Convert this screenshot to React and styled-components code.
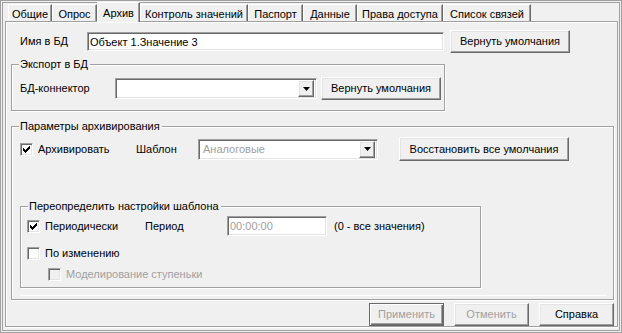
import React from "react";
import styled, { createGlobalStyle, css } from "styled-components";

const GlobalStyle = createGlobalStyle`
  html, body {
    margin: 0;
    padding: 0;
    background: #f0f0f0;
  }
  body {
    font-family: "Liberation Sans", Arial, sans-serif;
    font-size: 11px;
    line-height: 13px;
    color: #000;
  }
  * {
    box-sizing: border-box;
  }
`;

const sunken = css`
  border: 1px solid;
  border-color: #a0a0a0 #ffffff #ffffff #a0a0a0;
  box-shadow: inset 1px 1px #696969, inset -1px -1px #e3e3e3;
`;

const raised = css`
  border: 1px solid;
  border-color: #ffffff #696969 #696969 #ffffff;
  box-shadow: inset -1px -1px #a0a0a0, inset 1px 1px #e3e3e3;
`;

const Window = styled.div`
  width: 622px;
  height: 333px;
  border: 1px solid #a0a0a0;
  box-shadow: inset 0 0 0 1px #f0f0f0, inset 0 0 0 2px #a0a0a0;
  display: flex;
  flex-direction: column;
  background: #f0f0f0;
  overflow: hidden;
`;

const TabStrip = styled.div`
  display: flex;
  align-items: flex-start;
  height: 19px;
  margin-top: 1px;
  padding-left: 7px;
  position: relative;
  z-index: 2;
`;

const Tab = styled.div`
  width: ${(p) => p.$w}px;
  height: ${(p) => (p.$active ? 20 : 17)}px;
  margin-top: ${(p) => (p.$active ? 0 : 2)}px;
  padding-top: ${(p) => (p.$active ? 4 : 3)}px;
  text-align: center;
  white-space: nowrap;
  background: #f0f0f0;
  border-top: 1px solid #ffffff;
  border-left: 1px solid #ffffff;
  border-right: 1px solid #696969;
  box-shadow: inset -1px 0 #a0a0a0;
`;

const Pane = styled.div`
  flex: 1;
  min-height: 0;
  margin: 0 3px 5px 4px;
  padding: 8px 3px 0 5px;
  border: 1px solid #a0a0a0;
  box-shadow: inset 1px 1px #ffffff, 0 1px #ffffff;
  display: flex;
  flex-direction: column;
`;

const Row = styled.div`
  display: flex;
  align-items: center;
  height: ${(p) => p.$h || 23}px;
  margin-left: ${(p) => p.$ml || 0}px;
  margin-top: ${(p) => p.$mt || 0}px;
  flex: none;
`;

const Label = styled.span`
  width: ${(p) => (p.$w ? `${p.$w}px` : "auto")};
  margin-left: ${(p) => p.$ml || 0}px;
  flex: none;
  white-space: nowrap;
  color: ${(p) => (p.$disabled ? "#a0a0a0" : "#000")};
`;

const TextField = styled.input`
  ${sunken};
  width: ${(p) => p.$w}px;
  height: ${(p) => p.$h}px;
  padding: 0 0 0 2px;
  margin: 0;
  font: inherit;
  color: ${(p) => (p.$disabled ? "#a0a0a0" : "#000")};
  background: #ffffff;
  outline: none;
  flex: none;
`;

const Button = styled.button`
  ${raised};
  width: ${(p) => p.$w}px;
  height: ${(p) => p.$h || 23}px;
  margin: 0 0 0 ${(p) => p.$ml || 0}px;
  padding: 0;
  font: inherit;
  color: ${(p) => (p.disabled ? "#a0a0a0" : "#000")};
  background: #f0f0f0;
  flex: none;
  white-space: nowrap;
  ${(p) =>
    p.$default &&
    css`
      border-color: #696969;
      box-shadow: inset 1px 1px #ffffff, inset -1px -1px #696969,
        inset -2px -2px #a0a0a0;
    `}
`;

const ComboBox = styled.div`
  ${sunken};
  width: ${(p) => p.$w}px;
  height: 21px;
  padding: 2px;
  background: #ffffff;
  display: flex;
  align-items: center;
  flex: none;
`;

const ComboText = styled.span`
  flex: 1;
  padding-left: 2px;
  color: ${(p) => (p.$disabled ? "#a0a0a0" : "#000")};
  white-space: nowrap;
`;

const DropButton = styled.span`
  ${raised};
  width: 16px;
  height: 17px;
  background: #f0f0f0;
  display: flex;
  align-items: center;
  justify-content: center;
  flex: none;
`;

const Group = styled.div`
  position: relative;
  border: 1px solid #a0a0a0;
  box-shadow: inset 1px 1px #ffffff, 1px 1px #ffffff;
  margin-top: ${(p) => p.$mt || 0}px;
  width: ${(p) => (p.$w ? `${p.$w}px` : "auto")};
  padding: ${(p) => p.$pad};
  flex: ${(p) => (p.$grow ? "1 1 0" : "none")};
  min-height: 0;
`;

const Caption = styled.span`
  position: absolute;
  top: -7px;
  left: 7px;
  padding: 0 2px 0 1px;
  background: #f0f0f0;
  white-space: nowrap;
`;

const CheckWrap = styled.label`
  display: flex;
  align-items: center;
  width: ${(p) => (p.$w ? `${p.$w}px` : "auto")};
  flex: none;
  white-space: nowrap;
  color: ${(p) => (p.$disabled ? "#a0a0a0" : "#000")};
`;

const CheckBox = styled.span`
  ${sunken};
  width: 13px;
  height: 13px;
  margin-right: 5px;
  background: ${(p) => (p.$disabled ? "#f0f0f0" : "#ffffff")};
  display: flex;
  align-items: center;
  justify-content: center;
  flex: none;
`;

const Separator = styled.div`
  height: 1px;
  margin: 7px 6px 0 0;
  background: #ffffff;
`;

const Footer = styled.div`
  display: flex;
  justify-content: flex-end;
  gap: 10px;
  margin-top: 3px;
  flex: none;
`;

const tabs = [
  { name: "Общие", w: 44 },
  { name: "Опрос", w: 45 },
  { name: "Архив", w: 43, active: true },
  { name: "Контроль значений", w: 108 },
  { name: "Паспорт", w: 55 },
  { name: "Данные", w: 54 },
  { name: "Права доступа", w: 86 },
  { name: "Список связей", w: 88 },
];

function Arrow() {
  return (
    <svg width="7" height="4" viewBox="0 0 7 4">
      <polygon points="0,0 7,0 3.5,4" fill="#000" />
    </svg>
  );
}

function Combo({ w, text, disabled }) {
  return (
    <ComboBox $w={w}>
      <ComboText $disabled={disabled}>{text}</ComboText>
      <DropButton>
        <Arrow />
      </DropButton>
    </ComboBox>
  );
}

function Check({ w, checked, disabled, children }) {
  return (
    <CheckWrap $w={w} $disabled={disabled}>
      <CheckBox $disabled={disabled}>
        {checked && (
          <svg width="7" height="7" viewBox="0 0 7 7" shapeRendering="crispEdges">
            <polygon points="0,2 2,4 7,-1 7,2 2,7 0,5" fill="#000" />
          </svg>
        )}
      </CheckBox>
      {children}
    </CheckWrap>
  );
}

export default function App() {
  return (
    <>
      <GlobalStyle />
      <Window>
        <TabStrip>
          {tabs.map((t) => (
            <Tab key={t.name} $w={t.w} $active={t.active}>
              {t.name}
            </Tab>
          ))}
        </TabStrip>
        <Pane>
          <Row $ml={9}>
            <Label $w={67}>Имя в БД</Label>
            <TextField $w={357} $h={19} defaultValue="Объект 1.Значение 3" readOnly />
            <Button $w={120} $ml={6}>
              Вернуть умолчания
            </Button>
          </Row>

          <Group $mt={11} $w={434} $pad="12px 0 10px 8px">
            <Caption>Экспорт в БД</Caption>
            <Row>
              <Label $w={95}>БД-коннектор</Label>
              <Combo w={202} text="" />
              <Button $w={120} $ml={4}>
                Вернуть умолчания
              </Button>
            </Row>
          </Group>

          <Group $mt={15} $grow $pad="10px 0 0 8px">
            <Caption>Параметры архивирования</Caption>
            <Row $h={24}>
              <Check w={116} checked>
                Архивировать
              </Check>
              <Label $w={62}>Шаблон</Label>
              <Combo w={180} text="Аналоговые" disabled />
              <Button $w={170} $h={24} $ml={21}>
                Восстановить все умолчания
              </Button>
            </Row>

            <Group $mt={45} $w={461} $pad="9px 0 6px 6px">
              <Caption>Переопределить настройки шаблона</Caption>
              <Row $h={20}>
                <Check w={118} checked>
                  Периодически
                </Check>
                <Label $w={82}>Период</Label>
                <TextField $w={100} $h={20} $disabled defaultValue="00:00:00" readOnly />
                <Label $ml={7}>(0 - все значения)</Label>
              </Row>
              <Row $h={13} $mt={11}>
                <Check>По изменению</Check>
              </Row>
              <Row $h={13} $mt={8} $ml={21}>
                <Check disabled>Моделирование ступеньки</Check>
              </Row>
            </Group>
            <Separator />
          </Group>

          <Footer>
            <Button $w={75} disabled $default>
              Применить
            </Button>
            <Button $w={75} disabled>
              Отменить
            </Button>
            <Button $w={75}>Справка</Button>
          </Footer>
        </Pane>
      </Window>
    </>
  );
}
